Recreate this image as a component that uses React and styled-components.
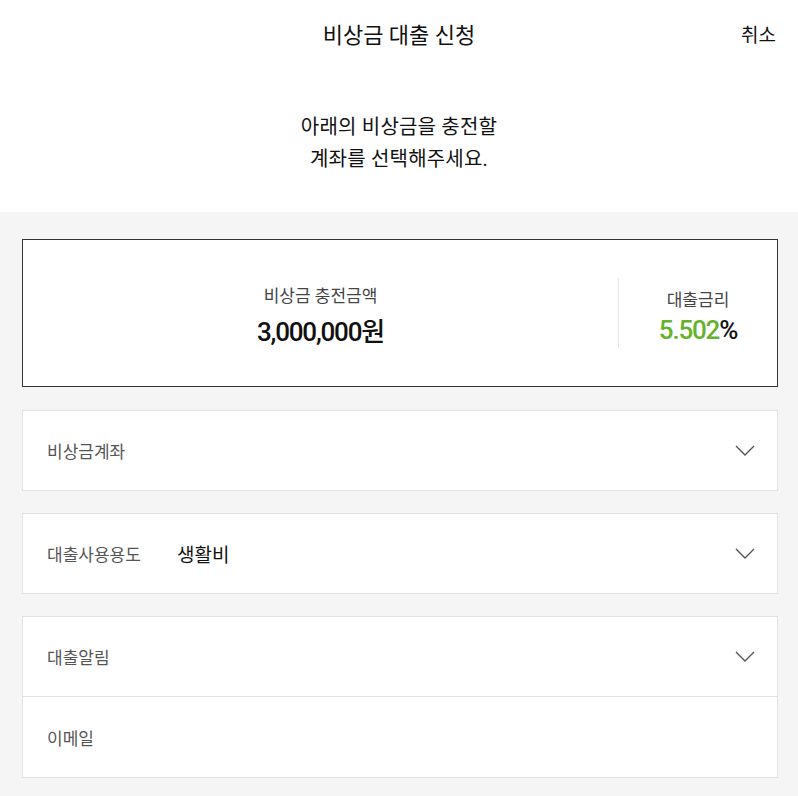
import React from "react";
import styled, { createGlobalStyle } from "styled-components";

const GlobalStyle = createGlobalStyle`
  html, body {
    margin: 0;
    padding: 0;
    background: #f5f5f5;
  }
  body {
    font-family: Roboto, "Noto Sans CJK KR", sans-serif;
    color: #111;
  }
`;

const Page = styled.div`
  width: 798px;
  min-height: 796px;
  background: #f5f5f5;
`;

const Top = styled.div`
  background: #fff;
  height: 212px;
  display: flex;
  flex-direction: column;
`;

const Header = styled.div`
  height: 66px;
  display: flex;
  align-items: center;
  justify-content: center;
  position: relative;
`;

const Title = styled.h1`
  margin: 0;
  font-size: 22px;
  font-weight: 400;
`;

const Cancel = styled.button`
  position: absolute;
  right: 22px;
  top: 20px;
  border: 0;
  background: none;
  padding: 0;
  font: inherit;
  font-size: 19px;
  color: #111;
`;

const Intro = styled.p`
  margin: 45px 0 0;
  text-align: center;
  font-size: 20px;
  line-height: 32px;
  letter-spacing: 0.2px;
`;

const Body = styled.div`
  padding: 27px 20px 0 22px;
  display: flex;
  flex-direction: column;
  gap: 22px;
`;

const Summary = styled.div`
  height: 148px;
  box-sizing: border-box;
  border: 1.5px solid #333;
  background: #fff;
  display: flex;
  align-items: center;
  margin-bottom: 1px;
`;

const SummaryCell = styled.div`
  flex: ${(p) => (p.$wide ? 1 : "0 0 158px")};
  display: flex;
  flex-direction: column;
  align-items: center;
  gap: 4px;
  padding-top: 4px;
  ${(p) => p.$wide && "border-right: 1px solid #e6e6e6;"}
`;

const SummaryLabel = styled.div`
  font-size: 17px;
  color: #444;
`;

const SummaryValue = styled.div`
  font-size: 26px;
  font-weight: 500;
  color: #111;
  letter-spacing: -1.2px;
`;

const Green = styled.span`
  color: #66b22c;
`;

const Card = styled.div`
  background: #fff;
  border: 1px solid #e2e2e2;
  display: flex;
  flex-direction: column;
`;

const Row = styled.div`
  height: 79px;
  display: flex;
  align-items: center;
  padding: 0 22px 0 24px;
  & + & {
    height: 80px;
    border-top: 1px solid #e2e2e2;
  }
`;

const Label = styled.span`
  width: 130px;
  font-size: 17px;
  color: #555;
`;

const Value = styled.span`
  flex: 1;
  font-size: 19px;
  color: #111;
`;

const Chevron = () => (
  <svg width="20" height="12" viewBox="0 0 20 12" fill="none">
    <path d="M1 1L10 10L19 1" stroke="#555" strokeWidth="1.4" />
  </svg>
);

const Field = ({ label, value, arrow }) => (
  <Row>
    <Label>{label}</Label>
    <Value>{value}</Value>
    {arrow && <Chevron />}
  </Row>
);

export default function App() {
  return (
    <Page>
      <GlobalStyle />
      <Top>
        <Header>
          <Title>비상금 대출 신청</Title>
          <Cancel>취소</Cancel>
        </Header>
        <Intro>
          아래의 비상금을 충전할
          <br />
          계좌를 선택해주세요.
        </Intro>
      </Top>
      <Body>
        <Summary>
          <SummaryCell $wide>
            <SummaryLabel>비상금 충전금액</SummaryLabel>
            <SummaryValue>3,000,000원</SummaryValue>
          </SummaryCell>
          <SummaryCell>
            <SummaryLabel>대출금리</SummaryLabel>
            <SummaryValue>
              <Green>5.502</Green>%
            </SummaryValue>
          </SummaryCell>
        </Summary>
        <Card>
          <Field label="비상금계좌" arrow />
        </Card>
        <Card>
          <Field label="대출사용용도" value="생활비" arrow />
        </Card>
        <Card>
          <Field label="대출알림" arrow />
          <Field label="이메일" />
        </Card>
      </Body>
    </Page>
  );
}
